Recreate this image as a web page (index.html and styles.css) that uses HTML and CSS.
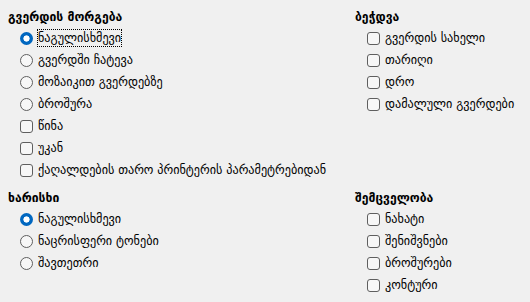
FILE: index.html
```html
<!DOCTYPE html>
<html lang="ka">
<head>
<meta charset="utf-8">
<title>ბეჭდვის პარამეტრები</title>
<link rel="stylesheet" href="styles.css">
</head>
<body>
<div class="page">
  <section class="group">
    <div class="title">გვერდის მორგება</div>
    <ul class="options">
      <li class="opt"><span class="radio on"></span><span class="label focus">ნაგულისხმევი</span></li>
      <li class="opt"><span class="radio"></span><span class="label">გვერდში ჩატევა</span></li>
      <li class="opt"><span class="radio"></span><span class="label">მოზაიკით გვერდებზე</span></li>
      <li class="opt"><span class="radio"></span><span class="label">ბროშურა</span></li>
      <li class="opt"><span class="check"></span><span class="label">წინა</span></li>
      <li class="opt"><span class="check"></span><span class="label">უკან</span></li>
      <li class="opt"><span class="check"></span><span class="label">ქაღალდების თარო პრინტერის პარამეტრებიდან</span></li>
    </ul>
  </section>
  <section class="group">
    <div class="title">ბეჭდვა</div>
    <ul class="options">
      <li class="opt"><span class="check"></span><span class="label">გვერდის სახელი</span></li>
      <li class="opt"><span class="check"></span><span class="label">თარიღი</span></li>
      <li class="opt"><span class="check"></span><span class="label">დრო</span></li>
      <li class="opt"><span class="check"></span><span class="label">დამალული გვერდები</span></li>
    </ul>
  </section>
  <section class="group">
    <div class="title">ხარისხი</div>
    <ul class="options">
      <li class="opt"><span class="radio on"></span><span class="label">ნაგულისხმევი</span></li>
      <li class="opt"><span class="radio"></span><span class="label">ნაცრისფერი ტონები</span></li>
      <li class="opt"><span class="radio"></span><span class="label">შავთეთრი</span></li>
    </ul>
  </section>
  <section class="group">
    <div class="title">შემცველობა</div>
    <ul class="options">
      <li class="opt"><span class="check"></span><span class="label">ნახატი</span></li>
      <li class="opt"><span class="check"></span><span class="label">შენიშვნები</span></li>
      <li class="opt"><span class="check"></span><span class="label">ბროშურები</span></li>
      <li class="opt"><span class="check"></span><span class="label">კონტური</span></li>
    </ul>
  </section>
</div>
</body>
</html>
```

FILE: styles.css
```css
html, body {
  margin: 0;
  padding: 0;
  background: #f0f0f0;
}
body {
  font-family: "DejaVu Sans", "Noto Sans", sans-serif;
  font-size: 12.2px;
  color: #000;
  width: 530px;
  height: 302px;
  overflow: hidden;
}
.page {
  display: grid;
  grid-template-columns: 347px 1fr;
  row-gap: 7px;
  padding: 7px 0 0 8px;
}
.title {
  font-weight: bold;
  height: 20px;
  line-height: 20px;
}
.options {
  list-style: none;
  margin: 0;
  padding: 0 0 0 12px;
}
.opt {
  display: flex;
  align-items: center;
  height: 22px;
  gap: 5px;
}
.radio {
  box-sizing: border-box;
  width: 13px;
  height: 13px;
  border-radius: 50%;
  border: 1px solid #5f5f5f;
  background: #f7f7f7;
  flex: none;
}
.radio.on {
  border: none;
  background: radial-gradient(circle, #ffffff 0 2.8px, #0067c0 3.4px);
}
.check {
  box-sizing: border-box;
  width: 13px;
  height: 13px;
  border-radius: 3px;
  border: 1px solid #5f5f5f;
  background: #f7f7f7;
  flex: none;
}
.label {
  line-height: 16px;
  white-space: nowrap;
}
.focus {
  outline: 1px dotted #000;
  outline-offset: 0;
}
```
